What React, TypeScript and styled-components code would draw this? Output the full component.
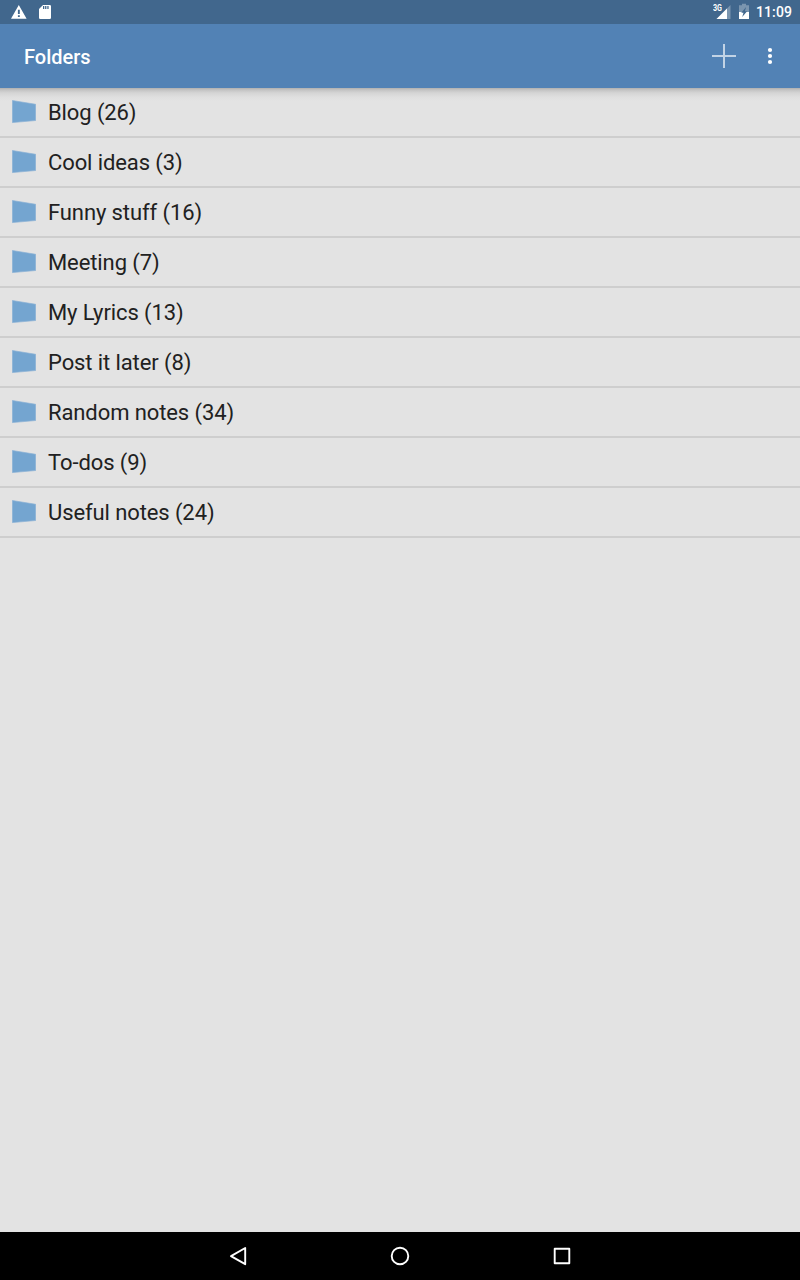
import React from "react";
import styled, { createGlobalStyle } from "styled-components";

const GlobalStyle = createGlobalStyle`
  * { box-sizing: border-box; }
  body { margin: 0; background: #e3e3e3; }
`;

const Screen = styled.div`
  width: 800px;
  height: 1280px;
  display: flex;
  flex-direction: column;
  overflow: hidden;
  background: #e3e3e3;
  color: #212121;
  font-family: Roboto, "Liberation Sans", sans-serif;
`;

const StatusBar = styled.header`
  height: 24px;
  flex: none;
  display: flex;
  align-items: center;
  justify-content: space-between;
  padding: 0 8px 0 10px;
  background: #41678d;
`;

const StatusGroup = styled.div<{ $gap: number }>`
  display: flex;
  align-items: center;
  gap: ${({ $gap }) => $gap}px;
`;

const Clock = styled.span`
  width: 36px;
  color: #fff;
  font-size: 14px;
  font-weight: 500;
  line-height: 24px;
  letter-spacing: 0.1px;
  white-space: nowrap;
`;

const Toolbar = styled.nav`
  height: 64px;
  flex: none;
  display: flex;
  align-items: center;
  padding: 0 16px 0 24px;
  background: #5282b5;
`;

const Title = styled.h1`
  flex: 1;
  margin: 2px 0 0;
  color: #fff;
  font-size: 20px;
  font-weight: 500;
  line-height: 24px;
`;

const IconButton = styled.button<{ $width: number }>`
  width: ${({ $width }) => $width}px;
  height: 24px;
  margin-left: 20px;
  padding: 0;
  border: 0;
  background: none;
  display: flex;
  justify-content: center;
`;

const Content = styled.main`
  flex: 1;
  background: linear-gradient(#b0b0b0 0, #c4c4c4 2px, #d5d5d5 5px, #dfdfdf 9px, #e3e3e3 13px);
`;

const FolderList = styled.ul`
  margin: 0;
  padding: 0;
  list-style: none;
`;

const FolderRow = styled.li`
  height: 50px;
  display: flex;
  align-items: center;
  gap: 12px;
  padding: 0 12px;
  border-bottom: 2px solid #cecece;
`;

const FolderLabel = styled.span`
  padding-top: 2px;
  font-size: 22px;
  line-height: 26px;
  letter-spacing: -0.1px;
`;

const NavBar = styled.footer`
  height: 48px;
  flex: none;
  display: flex;
  align-items: center;
  justify-content: center;
  gap: 138px;
  background: #000;
`;

const folders = [
  { name: "Blog", count: 26 },
  { name: "Cool ideas", count: 3 },
  { name: "Funny stuff", count: 16 },
  { name: "Meeting", count: 7 },
  { name: "My Lyrics", count: 13 },
  { name: "Post it later", count: 8 },
  { name: "Random notes", count: 34 },
  { name: "To-dos", count: 9 },
  { name: "Useful notes", count: 24 },
];

const WarningIcon = () => (
  <svg width="18" height="24" viewBox="0 0 18 24">
    <path fill="#fff" fillRule="evenodd" d="M1 18.800 8.800 5l7.800 13.800ZM7.900 9.800v4.200h1.900V9.800Zm0 5.400v1.800h1.900v-1.800Z" />
  </svg>
);

const SdCardIcon = () => (
  <svg width="14" height="24" viewBox="0 0 14 24">
    <path fill="#fff" fillRule="evenodd" d="M5 5h6.700A1.300 1.300 0 0 1 13 6.300v11.400A1.300 1.300 0 0 1 11.700 19H2.300A1.300 1.300 0 0 1 1 17.700V9ZM5 6v3h1.300V6Zm2.100 0v3h1.300V6Zm2.200 0v3h1.300V6Z" />
  </svg>
);

const SignalIcon = () => (
  <svg width="19" height="24" viewBox="0 0 19 24">
    <path fill="#fff" fillOpacity=".3" d="M17.500 5v14H3.500Z" />
    <path fill="#fff" d="M14 8.500V19H3.500Z" />
    <rect x="0" y="4" width="9.500" height="7.400" fill="#41678d" />
    <text x="0" y="11" fill="#fff" fontFamily="Roboto, sans-serif" fontSize="9" fontWeight="700" textLength="9" lengthAdjust="spacingAndGlyphs">3G</text>
  </svg>
);

const BatteryIcon = () => (
  <svg width="12" height="24" viewBox="0 0 12 24">
    <path fill="#fff" fillOpacity=".3" d="M4 3.800h4v1.500h3V12H1V5.300h3Z" />
    <path fill="#fff" d="M1 12h10v7H1Z" />
    <path fill="#41678d" d="M8.100 7 3.300 12.700h2.200l-1.300 4.300 4.900-5.700H6.900Z" />
  </svg>
);

const PlusIcon = () => (
  <svg width="24" height="24" viewBox="0 0 24 24">
    <path fill="#fff" fillOpacity=".65" d="M11 0h2v11h11v2H13v11h-2V13H0v-2h11Z" />
  </svg>
);

const MoreIcon = () => (
  <svg width="24" height="24" viewBox="0 0 24 24" fill="#fff">
    <circle cx="12" cy="6" r="2.100" />
    <circle cx="12" cy="12" r="2.100" />
    <circle cx="12" cy="18" r="2.100" />
  </svg>
);

const FolderIcon = () => (
  <svg width="24" height="24" viewBox="0 0 24 24">
    <path fill="#74a5d0" stroke="#8bb2d6" strokeWidth=".7" d="M.350.500 23.650 4.300v16.200L.350 22.600Z" />
  </svg>
);

const BackIcon = () => (
  <svg width="24" height="24" viewBox="0 0 24 24" fill="none" stroke="#fff" strokeWidth="1.900" strokeLinejoin="round">
    <path d="M19.200 4v16.200L5 12.100Z" />
  </svg>
);

const HomeIcon = () => (
  <svg width="24" height="24" viewBox="0 0 24 24" fill="none" stroke="#fff" strokeWidth="1.900">
    <circle cx="12" cy="12" r="8.300" />
  </svg>
);

const RecentsIcon = () => (
  <svg width="24" height="24" viewBox="0 0 24 24" fill="none" stroke="#fff" strokeWidth="1.900" strokeLinejoin="round">
    <path d="M4.700 4.700h14.600v14.600H4.700Z" />
  </svg>
);

export default function App() {
  return (
    <Screen>
      <GlobalStyle />
      <StatusBar>
        <StatusGroup $gap={10}>
          <WarningIcon />
          <SdCardIcon />
        </StatusGroup>
        <StatusGroup $gap={6}>
          <SignalIcon />
          <BatteryIcon />
          <Clock>11:09</Clock>
        </StatusGroup>
      </StatusBar>
      <Toolbar>
        <Title>Folders</Title>
        <IconButton $width={24} aria-label="Add folder"><PlusIcon /></IconButton>
        <IconButton $width={28} aria-label="More options"><MoreIcon /></IconButton>
      </Toolbar>
      <Content>
        <FolderList>
          {folders.map(({ name, count }) => (
            <FolderRow key={name}>
              <FolderIcon />
              <FolderLabel>{`${name} (${count})`}</FolderLabel>
            </FolderRow>
          ))}
        </FolderList>
      </Content>
      <NavBar>
        <BackIcon />
        <HomeIcon />
        <RecentsIcon />
      </NavBar>
    </Screen>
  );
}
